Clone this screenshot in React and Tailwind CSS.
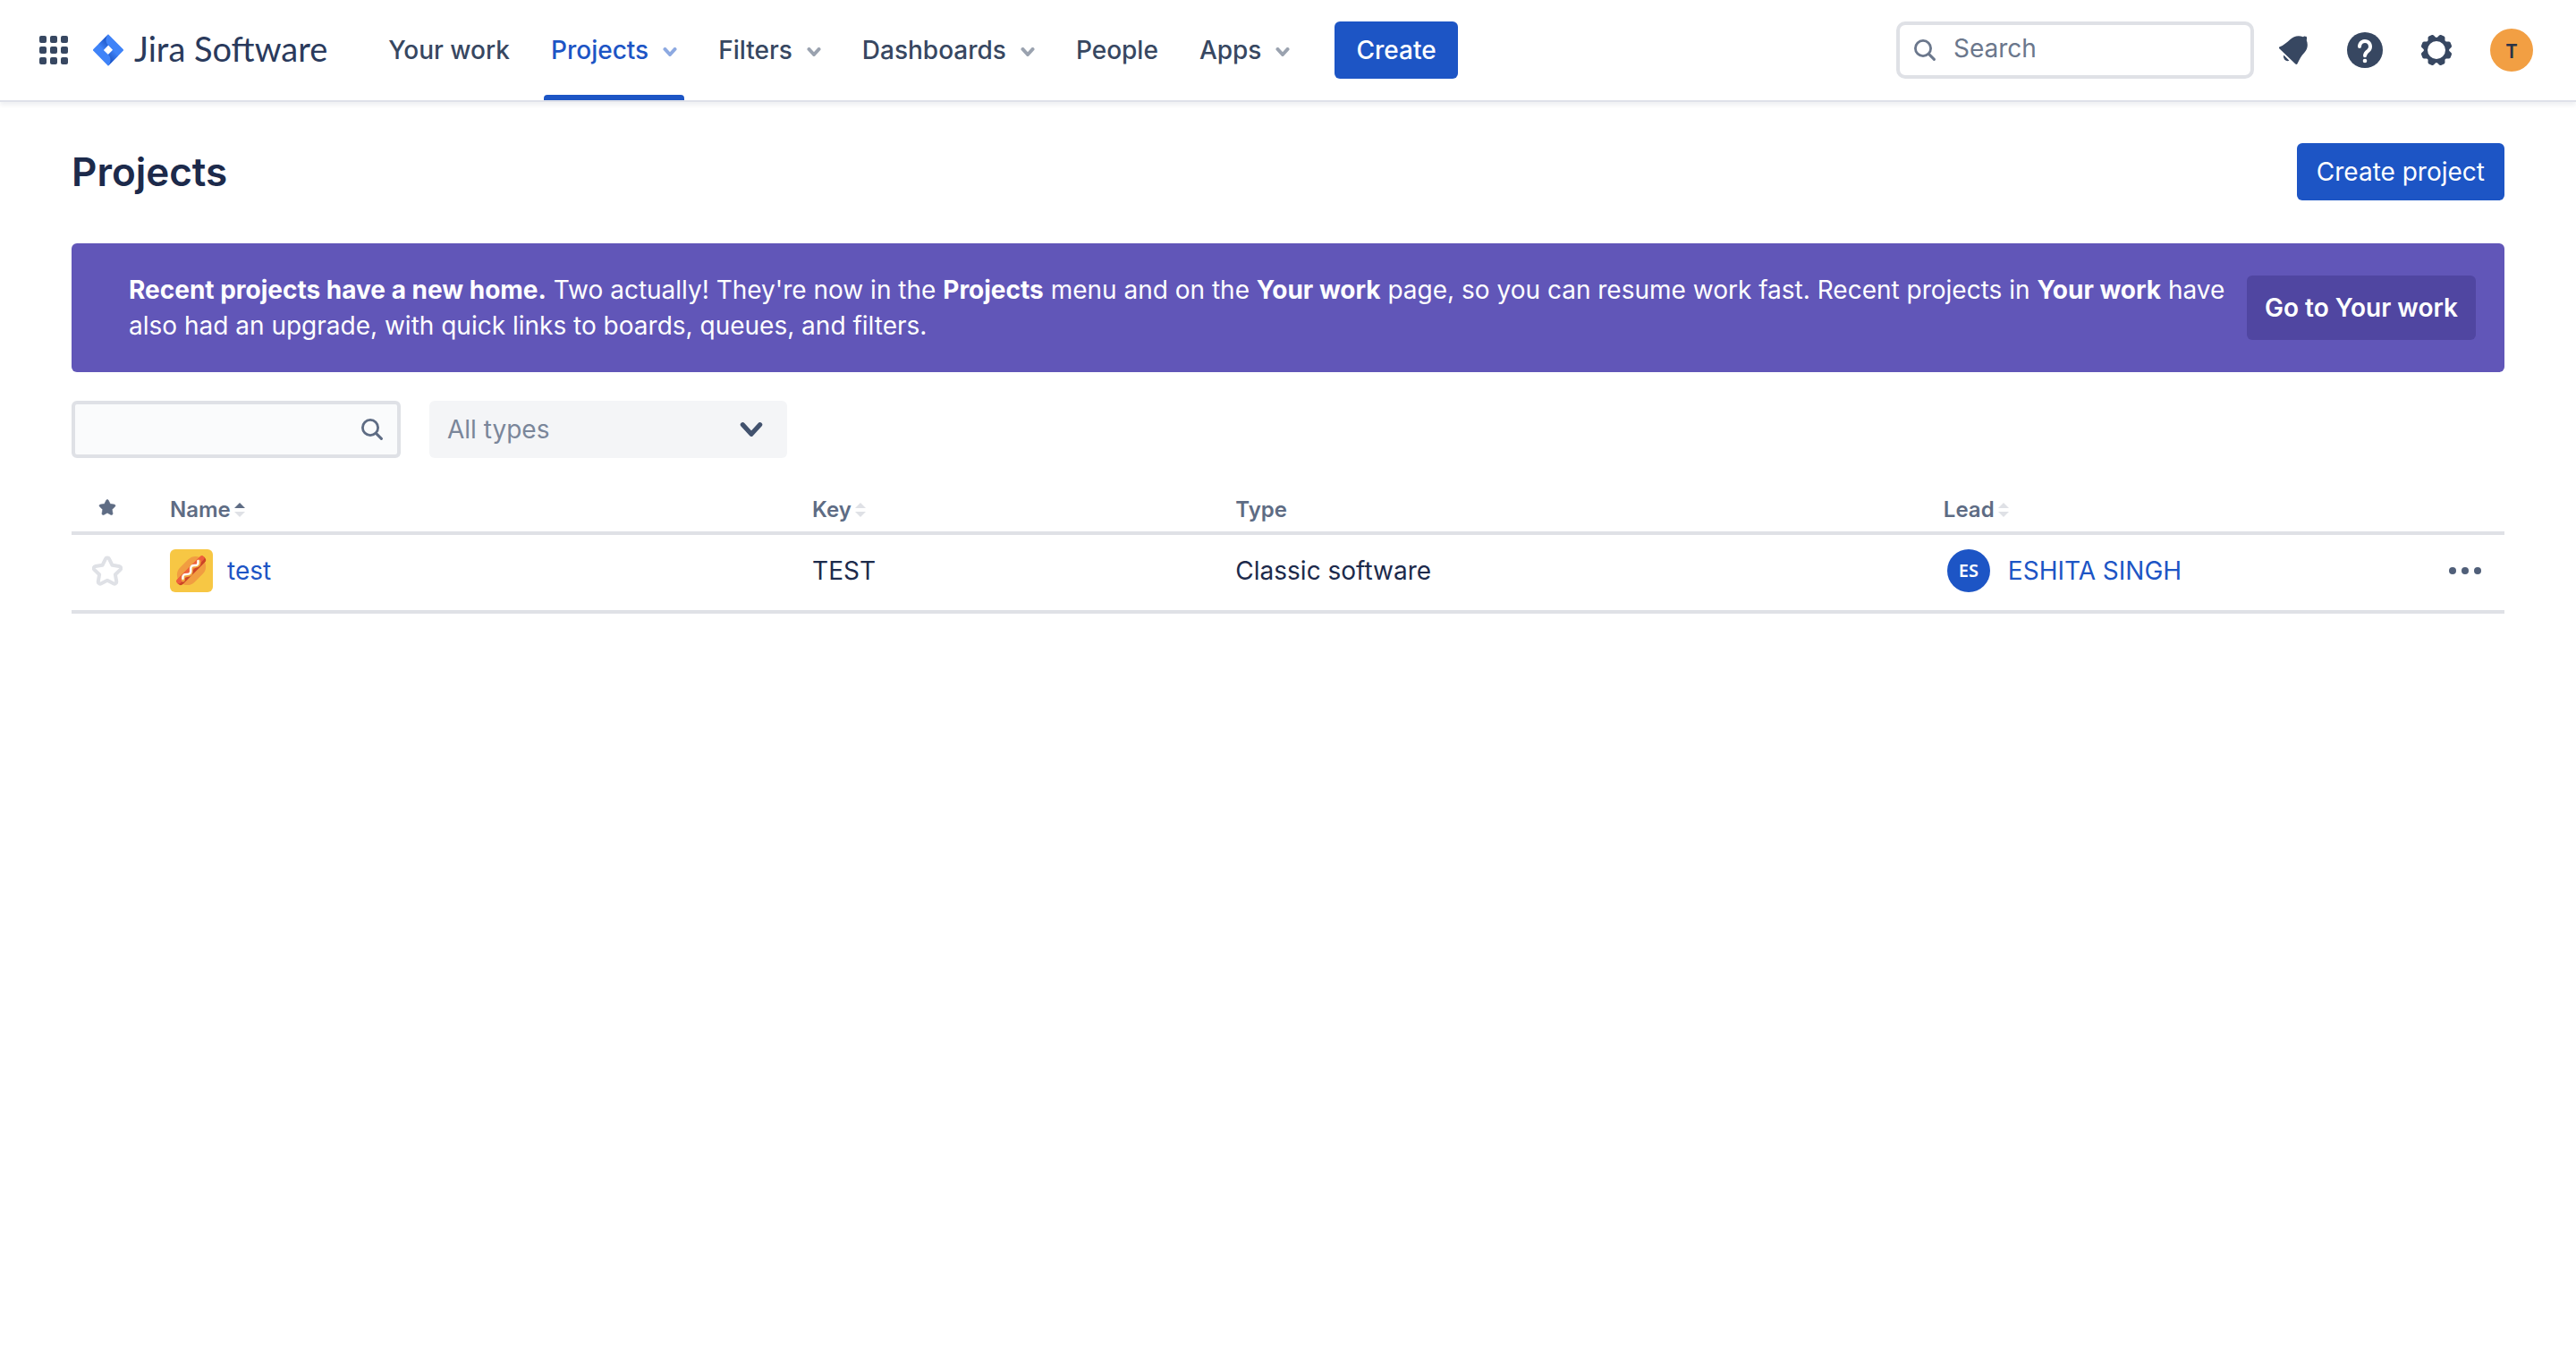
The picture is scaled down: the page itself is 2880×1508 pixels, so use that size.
import React from "react";

function Chevron({ className, size = 16, weight = 4 }) {
  return (
    <svg className={className} width={size} height={size} viewBox="0 0 16 16" fill="none" aria-hidden="true">
      <path d="M2.5 5l5.5 6 5.5-6" stroke="currentColor" strokeWidth={weight} strokeLinecap="round" strokeLinejoin="round" />
    </svg>
  );
}

function SearchIcon({ className }) {
  return (
    <svg className={className} width="24" height="24" viewBox="0 0 24 24" fill="none" aria-hidden="true">
      <circle cx="10" cy="10" r="8.6" stroke="currentColor" strokeWidth="2.8" />
      <path d="M16.4 16.4l6 6" stroke="currentColor" strokeWidth="3" strokeLinecap="round" />
    </svg>
  );
}

function AppSwitcherIcon() {
  const steps = [0, 12, 24];
  return (
    <svg width="32" height="32" viewBox="0 0 32 32" fill="currentColor" aria-hidden="true">
      {steps.map((y) => steps.map((x) => <rect key={`${x}-${y}`} x={x} y={y} width="8" height="8" rx="2" />))}
    </svg>
  );
}

function JiraMark() {
  return (
    <svg width="34" height="36" viewBox="0 0 34 36" aria-hidden="true">
      <defs>
        <linearGradient id="markTop" x1="17" y1="6" x2="8" y2="15" gradientUnits="userSpaceOnUse">
          <stop offset="0.1" stopColor="#1d55c5" />
          <stop offset="1" stopColor="#3f83f8" />
        </linearGradient>
        <linearGradient id="markBottom" x1="17" y1="30" x2="26" y2="21" gradientUnits="userSpaceOnUse">
          <stop offset="0.1" stopColor="#1d55c5" />
          <stop offset="1" stopColor="#3f83f8" />
        </linearGradient>
      </defs>
      <path
        fillRule="evenodd"
        fill="#3f83f8"
        d="M17 0.3L33.4 16.7a1.6 1.6 0 0 1 0 2.4L17 35.7 0.6 19.1a1.6 1.6 0 0 1 0-2.4zM17 12.6L11.8 17.9l5.2 5.2 5.2-5.2z"
      />
      <path fill="url(#markTop)" d="M17 12.6c-3.4-3.4-3.4-8.6 0-12.1L6 11.4l6 6.2z" />
      <path fill="url(#markBottom)" d="M17 23.1c3.4 3.4 3.4 8.8 0 12.3l11-11-6-6.3z" />
    </svg>
  );
}

function BellIcon() {
  return (
    <svg width="32" height="32" viewBox="0 0 32 32" fill="currentColor" aria-hidden="true">
      <path d="M0.4 12.6C5 10.6 9 7.4 12.6 4 16.5 0.4 21.5-1 27 1.2c0.6-0.7 1.5-0.8 2.2-0.4 0.3-0.3 1-0.1 1.4 0.3s0.6 1.1 0.3 1.5c0.4 0.7 0.2 1.5-0.2 2.1 2 5.3 1.3 10.3-2.3 14.1-3.5 3.7-5.7 7.8-7.8 12.2-0.4 1-1.5 1.2-2.3 0.5L0.3 14.2c-0.6-0.6-0.5-1.3 0.1-1.6z" />
      <path d="M5.2 21.6l6.2 6.2a4.8 4.8 0 0 1-6.2-6.2z" />
    </svg>
  );
}

function HelpIcon() {
  return (
    <svg width="40" height="40" viewBox="0 0 40 40" fill="none" aria-hidden="true">
      <circle cx="20" cy="20" r="20" fill="currentColor" />
      <path d="M14 16a6 6 0 1 1 9.8 4.6C21.5 22.3 20 23.5 20 26.3" stroke="white" strokeWidth="4" strokeLinecap="round" />
      <circle cx="20" cy="32" r="2.3" fill="white" />
    </svg>
  );
}

function GearIcon() {
  const angles = [22.5, 67.5, 112.5, 157.5, 202.5, 247.5, 292.5, 337.5];
  return (
    <svg width="36" height="36" viewBox="0 0 36 36" aria-hidden="true">
      <circle cx="18" cy="18" r="12.1" fill="none" stroke="currentColor" strokeWidth="4.2" />
      {angles.map((a) => (
        <path key={a} transform={`rotate(${a} 18 18)`} fill="currentColor" d="M12.8 6L14.4 1.9Q14.9 0.5 16.2 0.4H19.8Q21.1 0.5 21.6 1.9L23.2 6z" />
      ))}
    </svg>
  );
}

function HotDogIcon() {
  return (
    <svg className="shrink-0 rounded-md" width="48" height="48" viewBox="0 0 48 48" fill="none" aria-hidden="true">
      <rect width="48" height="48" fill="#f7c744" />
      <g transform="rotate(-45 24 24)">
        <rect x="6" y="12.5" width="36" height="23" rx="11.5" fill="#f19d41" />
        <rect x="3" y="20" width="42" height="8" rx="4" fill="#cc4426" />
        <rect x="3" y="19.5" width="42" height="5.5" rx="2.7" fill="#ee5f3c" />
        <path d="M10 25c3-4 5-3 7.5-0.5s4.5 1.5 6.5-1 4.5-2.5 7 0 4.5 1.5 6.5-1" stroke="#f0a53f" strokeWidth="4" strokeLinecap="round" />
        <path d="M11 23.5c3-3.5 4.5-2.5 7 0s4.5 1.5 6.5-1 4.5-2.5 6.5 0 4 1.5 6-1" stroke="white" strokeWidth="2.4" strokeLinecap="round" />
      </g>
    </svg>
  );
}

const STAR =
  "M17 2.5c0.9 0 1.7 0.5 2.1 1.3l3.4 7 7.7 1.1c2 0.3 2.7 2.6 1.3 4l-5.6 5.4 1.3 7.6c0.3 1.9-1.7 3.3-3.4 2.4L17 27.7l-6.8 3.6c-1.7 0.9-3.7-0.5-3.4-2.4l1.3-7.6-5.6-5.4c-1.4-1.4-0.7-3.7 1.3-4l7.7-1.1 3.4-7c0.4-0.8 1.2-1.3 2.1-1.3z";

function StarIcon({ size, filled }) {
  return (
    <svg width={size} height={size} viewBox="0 0 34 34" aria-hidden="true">
      <path d={STAR} fill={filled ? "currentColor" : "none"} stroke="currentColor" strokeWidth={filled ? 1 : 4} strokeLinejoin="round" />
    </svg>
  );
}

function SortArrows({ up }) {
  return (
    <svg width="12" height="16" viewBox="0 0 12 16" aria-hidden="true">
      <path d="M0 6L6 0l6 6z" fill={up ? "#5e6c84" : "#dfe1e6"} />
      <path d="M0 10h12l-6 6z" fill="#dfe1e6" />
    </svg>
  );
}

const NAV = [
  { label: "Your work" },
  { label: "Projects", menu: true, active: true },
  { label: "Filters", menu: true },
  { label: "Dashboards", menu: true },
  { label: "People" },
  { label: "Apps", menu: true },
];

function NavItem({ label, menu, active }) {
  return (
    <button
      type="button"
      className={
        active
          ? "relative flex h-full items-center gap-4 px-2 text-[#1d55c5]"
          : "relative flex h-full items-center gap-4 px-2"
      }
    >
      {label}
      {menu && <Chevron className="mt-1 opacity-50" />}
      {active && <span className="absolute inset-x-0 bottom-0 h-[6px] rounded-t-sm bg-[#1d55c5]" />}
    </button>
  );
}

function Header() {
  return (
    <header className="flex items-center border-b-2 border-[#dfe1e9] pr-12 pl-11 text-[#374761] shadow-[0_4px_4px_rgba(9,30,66,0.06)]">
      <button type="button" aria-label="Switch to another product">
        <AppSwitcherIcon />
      </button>
      <a href="#home" className="ml-7 flex items-center gap-3 font-['Lato',sans-serif] text-[38px] leading-[48px] whitespace-nowrap text-[#2a3a5c]">
        <JiraMark />
        <span className="pb-1">Jira Software</span>
      </a>
      <nav className="ml-[60px] flex h-28 items-center gap-[30px] font-medium whitespace-nowrap">
        {NAV.map((item) => (
          <NavItem key={item.label} {...item} />
        ))}
        <button type="button" className="ml-3 h-16 rounded-md bg-[#1d55c5] px-6 text-white">
          Create
        </button>
      </nav>
      <div className="ml-auto flex items-center">
        <div className="relative">
          <SearchIcon className="absolute top-5 left-5 text-[#6b778c]" />
          <input
            type="text"
            aria-label="Search"
            placeholder="Search"
            className="block h-16 w-[400px] rounded-[10px] border-4 border-[#dfe1e6] bg-white pr-4 pb-1 pl-[60px] placeholder:text-[#6b778c] placeholder:opacity-100"
          />
        </div>
        <button type="button" aria-label="Notifications" className="ml-7">
          <BellIcon />
        </button>
        <button type="button" aria-label="Help" className="ml-11">
          <HelpIcon />
        </button>
        <button type="button" aria-label="Settings" className="ml-[42px]">
          <GearIcon />
        </button>
        <button
          type="button"
          aria-label="Your profile"
          className="ml-[42px] flex size-12 items-center justify-center rounded-full bg-[#f29f43] font-['Noto_Sans',sans-serif] text-[22px] leading-6 font-semibold text-[#2b3347]"
        >
          T
        </button>
      </div>
    </header>
  );
}

function Banner() {
  return (
    <section className="mt-12 flex items-center gap-6 rounded-md bg-[#6156b8] py-8 pr-8 pl-16 text-white">
      <p className="flex-1">
        <b className="font-bold">Recent projects have a new home.</b> Two actually! They're now in the{" "}
        <b className="font-bold">Projects</b> menu and on the <b className="font-bold">Your work</b> page, so you can
        resume work fast. Recent projects in <b className="font-bold">Your work</b> have also had an upgrade, with quick
        links to boards, queues, and filters.
      </p>
      <button type="button" className="h-[72px] rounded-md bg-[#5046a1] px-5 font-semibold whitespace-nowrap">
        Go to Your work
      </button>
    </section>
  );
}

function Filters() {
  return (
    <form className="mt-8 flex gap-8">
      <div className="relative">
        <input
          type="text"
          aria-label="Search projects"
          className="block h-16 w-[368px] rounded-md border-4 border-[#dfe1e6] bg-[#fafbfc] pr-14 pl-4"
        />
        <SearchIcon className="absolute top-5 right-5 text-[#5e6c84]" />
      </div>
      <div className="relative">
        <select
          aria-label="Project type"
          className="block h-16 w-[400px] appearance-none rounded-md bg-[#f4f5f7] pr-16 pl-5 text-[#7a869a]"
        >
          <option>All types</option>
        </select>
        <Chevron size={28} weight={3} className="pointer-events-none absolute top-[18px] right-[26px] text-[#42526e]" />
      </div>
    </form>
  );
}

function SortHeader({ label, up }) {
  return (
    <button type="button" className="flex items-center gap-1 font-semibold">
      {label}
      <SortArrows up={up} />
    </button>
  );
}

function ProjectsTable() {
  return (
    <table className="mt-8 w-full table-fixed border-collapse text-left">
      <colgroup>
        <col className="w-[102px]" />
        <col className="w-[26.4%]" />
        <col className="w-[17.4%]" />
        <col className="w-[29.1%]" />
        <col />
        <col className="w-[100px]" />
      </colgroup>
      <thead className="text-[24px] leading-8 text-[#5e6c84]">
        <tr className="h-[52px] border-b-4 border-[#dfe1e6]">
          <th aria-label="Starred" className="pb-1">
            <span className="flex w-20 justify-center">
              <StarIcon size={20} filled />
            </span>
          </th>
          <th className="px-2 pt-0.5">
            <SortHeader label="Name" up />
          </th>
          <th className="px-2 pt-0.5">
            <SortHeader label="Key" />
          </th>
          <th className="px-2 pt-0.5 font-semibold">Type</th>
          <th className="px-2 pt-0.5">
            <SortHeader label="Lead" />
          </th>
          <th aria-label="Actions" />
        </tr>
      </thead>
      <tbody>
        <tr className="h-[88px] border-b-4 border-[#dfe1e6]">
          <td className="pb-1">
            <button type="button" aria-label="Star test" className="flex w-20 justify-center text-[#dfe1e6]">
              <StarIcon size={34} />
            </button>
          </td>
          <td className="px-2 pb-1">
            <a href="#test" className="flex items-center gap-4 text-[#1d55c5]">
              <HotDogIcon />
              test
            </a>
          </td>
          <td className="px-2 pb-1">TEST</td>
          <td className="px-2 pb-1">Classic software</td>
          <td className="px-3 pb-1">
            <a href="#lead" className="flex items-center gap-5 whitespace-nowrap text-[#1d55c5]">
              <span className="flex size-12 items-center justify-center rounded-full bg-[#1d55c5] font-['Noto_Sans',sans-serif] text-[20px] leading-6 font-semibold text-white">
                ES
              </span>
              ESHITA SINGH
            </a>
          </td>
          <td className="pb-1">
            <button type="button" aria-label="More actions" className="ml-auto flex gap-[6px] pr-[26px]">
              <span className="size-2 rounded-full bg-[#505f79]" />
              <span className="size-2 rounded-full bg-[#505f79]" />
              <span className="size-2 rounded-full bg-[#505f79]" />
            </button>
          </td>
        </tr>
      </tbody>
    </table>
  );
}

export default function App() {
  return (
    <div className="min-h-screen bg-white font-['Inter',sans-serif] text-[28px] leading-10 text-[#1c2a4b]">
      <Header />
      <main className="px-20 pt-[46px]">
        <div className="flex items-center justify-between">
          <h1 className="text-[44px] leading-[56px] font-semibold">Projects</h1>
          <button type="button" className="h-16 rounded-md bg-[#1d55c5] px-[22px] text-white">
            Create project
          </button>
        </div>
        <Banner />
        <Filters />
        <ProjectsTable />
      </main>
    </div>
  );
}
